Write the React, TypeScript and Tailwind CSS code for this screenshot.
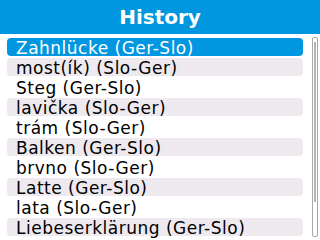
const entries = [
  'Zahnlücke (Ger-Slo)',
  'most(ík) (Slo-Ger)',
  'Steg (Ger-Slo)',
  'lavička (Slo-Ger)',
  'trám (Slo-Ger)',
  'Balken (Ger-Slo)',
  'brvno (Slo-Ger)',
  'Latte (Ger-Slo)',
  'lata (Slo-Ger)',
  'Liebeserklärung (Ger-Slo)',
];

export default function App() {
  const selected = 0;
  return (
    <div className="w-[320px] h-[240px] bg-white overflow-hidden flex flex-col font-['DejaVu_Sans',sans-serif]">
      <div className="h-[34px] shrink-0 bg-[#0096e0] flex items-center justify-center">
        <h1 className="text-[20px] font-bold text-white leading-none">History</h1>
      </div>
      <div className="flex pt-[4px]">
        <ul className="ml-[7px] w-[296px] flex flex-col">
          {entries.map((e, i) => (
            <li
              key={e}
              className={`h-[18px] mb-[2px] rounded-[4px] pl-[9px] text-[17px] leading-[18px] pt-[1px] tracking-[0.5px] whitespace-nowrap ${
                i === selected
                  ? 'bg-[#0096e0] text-white'
                  : i % 2 === 1
                  ? 'bg-[#eee9ee] text-black'
                  : 'bg-white text-black'
              }`}
            >
              {e}
            </li>
          ))}
        </ul>
        <div className="ml-[9px] mt-[-1px] w-[6px] h-[200px] border border-[#a8a8a8] rounded-[2px] p-[1px]">
          <div className="h-[160px] mt-[3px] bg-[#b4b4b4]" />
        </div>
      </div>
    </div>
  );
}
